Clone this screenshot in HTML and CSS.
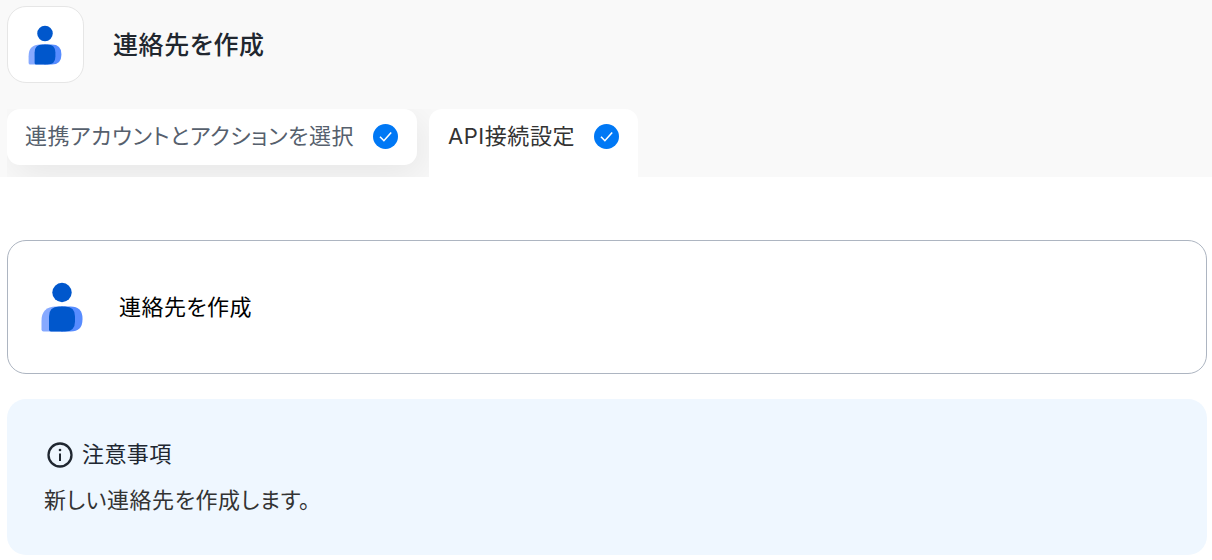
FILE: index.html
```html
<!DOCTYPE html>
<html lang="ja">
<head>
    <meta charset="UTF-8">
    <meta name="viewport" content="width=device-width, initial-scale=1.0">
    <title>連絡先を作成</title>
    <link rel="stylesheet" href="styles.css">
</head>
<body>
    <header class="header">
        <div class="title-row">
            <div class="app-icon">
                <svg class="contact-icon" viewBox="0 0 42 50">
                    <circle cx="21" cy="10.5" r="9.7" fill="#0057cc"/>
                    <path d="M15 24.5h7v25H2.5Q.5 49.5.5 47.5V39Q.5 24.5 15 24.5z" fill="#86a9ff"/>
                    <path d="M20 24.5h9.5Q41.5 24.5 41.5 36.5v1Q41.5 49.5 29.5 49.5H20z" fill="#578cff"/>
                    <path d="M18 24.5h6Q34 24.5 34 34.5v5Q34 49.5 24 49.5H10Q8 49.5 8 47.5V34.5Q8 24.5 18 24.5z" fill="#0057cc"/>
                </svg>
            </div>
            <h1 class="title">連絡先を作成</h1>
        </div>

        <nav class="tabs">
            <div class="tab">
                <span class="tab-label">連携アカウントとアクションを選択</span>
                <svg class="check" viewBox="0 0 26 26">
                    <circle cx="12.5" cy="13.5" r="12.5" fill="#0078f5"/>
                    <path d="M7 13.8l3.9 3.9 7.3-8.2" fill="none" stroke="#fff" stroke-width="1.6"/>
                </svg>
            </div>
            <div class="tab active">
                <span class="tab-label">API接続設定</span>
                <svg class="check" viewBox="0 0 26 26">
                    <circle cx="12.5" cy="13.5" r="12.5" fill="#0078f5"/>
                    <path d="M7 13.8l3.9 3.9 7.3-8.2" fill="none" stroke="#fff" stroke-width="1.6"/>
                </svg>
            </div>
        </nav>
    </header>

    <main class="content">
        <section class="card">
            <svg class="contact-icon" viewBox="0 0 42 50">
                <circle cx="21" cy="10.5" r="9.7" fill="#0057cc"/>
                <path d="M15 24.5h7v25H2.5Q.5 49.5.5 47.5V39Q.5 24.5 15 24.5z" fill="#86a9ff"/>
                <path d="M20 24.5h9.5Q41.5 24.5 41.5 36.5v1Q41.5 49.5 29.5 49.5H20z" fill="#578cff"/>
                <path d="M18 24.5h6Q34 24.5 34 34.5v5Q34 49.5 24 49.5H10Q8 49.5 8 47.5V34.5Q8 24.5 18 24.5z" fill="#0057cc"/>
            </svg>
            <span class="card-label">連絡先を作成</span>
        </section>

        <section class="notice">
            <h2 class="notice-title">
                <svg class="info-icon" viewBox="0 0 26 26">
                    <circle cx="13" cy="13" r="11.5" fill="none" stroke="#202731" stroke-width="2.3"/>
                    <path d="M13 11.5v7.5" stroke="#202731" stroke-width="2"/>
                    <circle cx="13" cy="8" r="1.3" fill="#202731"/>
                </svg>
                <span>注意事項</span>
            </h2>
            <p class="notice-text">新しい連絡先を作成します。</p>
        </section>
    </main>
</body>
</html>
```

FILE: styles.css
```css
* {
    box-sizing: border-box;
}
body {
    margin: 0;
    font-family: Inter, "Noto Sans CJK JP", sans-serif;
    font-size: 22px;
    font-feature-settings: "palt";
    color: #333;
    background-color: #fff;
}
h1, h2, p {
    margin: 0;
}
svg {
    display: block;
    flex: none;
}
.header {
    height: 177px;
    padding: 6px 7px 0;
    background-color: #f9f9f9;
}
.title-row {
    display: flex;
    align-items: center;
    gap: 29px;
}
.app-icon {
    display: flex;
    align-items: center;
    justify-content: center;
    width: 77px;
    height: 77px;
    padding-right: 2px;
    border: 1px solid #e6e6e6;
    border-radius: 19px;
    background-color: #fff;
}
.app-icon .contact-icon {
    width: 34px;
    height: 40px;
}
.title {
    font-size: 25px;
    font-weight: 500;
    line-height: 36px;
    letter-spacing: 0.6px;
    color: #21272f;
}
.tabs {
    display: flex;
    gap: 12px;
    width: 631px;
    height: 68px;
    margin-top: 26px;
    overflow: hidden;
}
.tab {
    display: flex;
    justify-content: space-between;
    width: 410px;
    height: 56px;
    padding: 11px 18px 0;
    border-radius: 13px;
    background-color: #fff;
    color: #56606d;
    box-shadow: 6px 10px 38px rgba(0, 0, 0, 0.08);
}
.tab.active {
    position: relative;
    width: 209px;
    height: 68px;
    padding-left: 19px;
    border-radius: 13px 13px 0 0;
    color: #333;
    box-shadow: none;
}
.tab-label {
    line-height: 32px;
    letter-spacing: 0.55px;
    white-space: nowrap;
}
.check {
    width: 26px;
    height: 26px;
    margin-top: 3px;
}
.content {
    padding: 63px 5px 0 7px;
}
.card {
    display: flex;
    align-items: center;
    gap: 36px;
    height: 134px;
    padding: 0 33px;
    border: 1px solid #adb5c1;
    border-radius: 19px;
}
.card .contact-icon {
    width: 42px;
    height: 50px;
}
.card-label {
    padding-bottom: 1px;
    line-height: 32px;
    letter-spacing: 0.45px;
    color: #000;
}
.notice {
    height: 156px;
    margin-top: 25px;
    padding: 39px 37px 0;
    border-radius: 19px;
    background-color: #eff7ff;
}
.notice-title {
    display: flex;
    align-items: center;
    gap: 9px;
    padding-left: 3px;
    font-size: 22px;
    font-weight: 400;
    line-height: 32px;
    letter-spacing: 0.4px;
    color: #202731;
}
.info-icon {
    width: 26px;
    height: 26px;
    margin-top: 1px;
}
.notice-text {
    margin-top: 14px;
    line-height: 32px;
    letter-spacing: 0.55px;
}
```
